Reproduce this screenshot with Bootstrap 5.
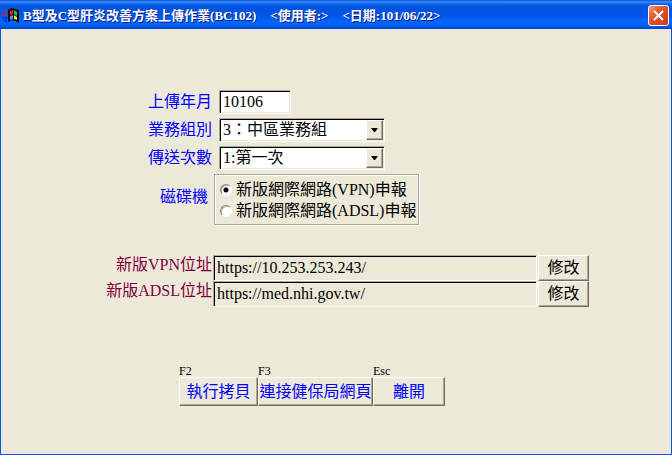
<!DOCTYPE html>
<html lang="zh-Hant">
<head>
<meta charset="utf-8">
<meta name="viewport" content="width=device-width, initial-scale=1">
<title>B型及C型肝炎改善方案上傳作業(BC102)</title>
<link rel="stylesheet" href="https://cdn.jsdelivr.net/npm/bootstrap@5.3.0/dist/css/bootstrap.min.css">
<style>
  body {
    font-family: "Liberation Serif", "Noto Sans CJK TC", serif;
    font-weight: 400;
    font-size: 16px;
    line-height: 20px;
    color: #000;
    background: #ece9d8;
  }
  .window { border: solid #0054e3; border-width: 0 1px 1px; }
  .title-bar {
    height: 29px;
    padding: 2px 1px 0 2px;
    margin: 0 -1px;
    background: linear-gradient(#0a4fd0 0, #3c90fc 2px, #0864ea 4px, #0053dd 8px, #0055e5 15px, #0264fc 22px, #0262f6 25px, #0143cf 29px);
  }
  .title-text {
    padding-left: 3px;
    font-size: 13px;
    font-weight: 700;
    line-height: 26px;
    color: #fff;
    text-shadow: 1px 1px #0a1883;
    gap: 14px;
    white-space: pre;
  }
  .close-btn {
    width: 21px;
    height: 21px;
    margin-right: 2px;
    border: 1px solid #fff;
    border-radius: 3px;
    background: linear-gradient(135deg, #f0a080, #e25a34 35%, #c83a10);
  }
  .form-area { padding-top: 61px; }
  .entry-label { width: 212px; padding-right: 1px; color: #00f; text-align: right; }
  .entry-field { margin-left: 6px; }
  .sunken {
    height: 24px;
    padding: 0 3px;
    border: 1px solid;
    border-color: #aca899 #fff #fff #aca899;
    box-shadow: inset 1px 1px #000, inset -1px -1px #ece9d8;
    border-radius: 0;
    background: #fff;
    color: #000;
    line-height: 20px;
    outline-offset: 1px;
  }
  .month-box { width: 72px; }
  .drop { width: 166px; }
  .drop select { appearance: none; }
  .drop-arrow { top: 2px; right: 2px; width: 17px; height: 20px; pointer-events: none; }
  .raised {
    border: 1px solid;
    border-color: #fff #716f64 #716f64 #fff;
    box-shadow: inset -1px -1px #aca899;
    border-radius: 0;
    background: #ece9d8;
    white-space: nowrap;
  }
  .medium-label { padding: 0 5px 6px 0; }
  .medium-box {
    width: 205px;
    height: 51px;
    margin-left: 1px;
    padding: 4px;
    border: 1px solid #aca899;
    box-shadow: inset 1px 1px #fff, 1px 1px #fff;
  }
  .medium-box input {
    flex: none;
    width: 12px;
    height: 12px;
    margin: 0 4px 0 1px;
    appearance: none;
    border: 1px solid;
    border-color: #8c897c #fff #fff #8c897c;
    border-radius: 50%;
    background: #fff;
    box-shadow: inset 1px 1px #b5b2a4;
  }
  .medium-box input:checked { background: radial-gradient(circle, #000 2px, #fff 3px); }
  .medium-box label { line-height: 21px; white-space: nowrap; }
  .addresses { padding-top: 30px; }
  .address-label { color: #800040; }
  .address-box { width: 324px; height: 26px; min-width: 0; background: #ece9d8; }
  .edit-btn { width: 51px; height: 26px; margin-left: 1px; }
  .actions { padding: 59px 0 20px 178px; }
  .key-hint { font-size: 12px; line-height: 11px; }
  .action-btn { height: 29px; color: #00f; }
  .w-copy { width: 79px; }
  .w-link { width: 115px; }
  .w-exit { width: 72px; }
</style>
</head>
<body>
<div class="window min-vh-100">
  <header class="title-bar d-flex align-items-center">
    <svg width="18" height="18" viewBox="0 0 18 18" aria-hidden="true">
      <path d="M6 3 10 1 13 2 17 3V16L14 14 10 13 6 15Z" fill="#000"/>
      <path d="M8 4 11 3V7L8 8Z" fill="#f02020"/>
      <path d="M12 3 15 5V9L12 7Z" fill="#20d040"/>
      <path d="M8 9 11 8V12L8 13Z" fill="#30a0ff"/>
      <path d="M12 8 15 10V13L12 12Z" fill="#ffe010"/>
      <path d="M1 4h1v2H1zM3 4h2v2H3zM1 7h1v2H1zM3 7h2v2H3z" fill="#e02040"/>
      <path d="M1 10h1v2H1zM3 10h2v2H3zM1 13h1v1H1zM3 13h2v2H3z" fill="#1020b0"/>
    </svg>
    <div class="title-text d-flex flex-grow-1"><span>B型及C型肝炎改善方案上傳作業(BC102)</span><span>&lt;使用者:&gt;</span><span>&lt;日期:101/06/22&gt;</span></div>
    <button type="button" class="close-btn p-0 d-flex align-items-center justify-content-center" aria-label="關閉">
      <svg width="13" height="13" viewBox="0 0 13 13" aria-hidden="true"><path d="M2 2 11 11M11 2 2 11" stroke="#fff" stroke-width="2"/></svg>
    </button>
  </header>

  <form class="form-area">
    <div class="d-flex align-items-center mb-1">
      <label class="entry-label" for="month">上傳年月</label>
      <input class="sunken month-box entry-field" id="month" type="text" value="10106">
    </div>
    <div class="d-flex align-items-center mb-1">
      <label class="entry-label" for="group">業務組別</label>
      <div class="drop position-relative entry-field">
        <select class="sunken w-100 d-block" id="group"><option>3：中區業務組</option></select>
        <span class="drop-arrow raised position-absolute d-flex align-items-center justify-content-center">
          <svg width="8" height="4" viewBox="0 0 8 4" aria-hidden="true"><path d="M0 0h7L4 4H3Z"/></svg>
        </span>
      </div>
    </div>
    <div class="d-flex align-items-center mb-1">
      <label class="entry-label" for="times">傳送次數</label>
      <div class="drop position-relative entry-field">
        <select class="sunken w-100 d-block" id="times"><option>1:第一次</option></select>
        <span class="drop-arrow raised position-absolute d-flex align-items-center justify-content-center">
          <svg width="8" height="4" viewBox="0 0 8 4" aria-hidden="true"><path d="M0 0h7L4 4H3Z"/></svg>
        </span>
      </div>
    </div>
    <div class="d-flex align-items-center" role="radiogroup" aria-labelledby="medium">
      <span class="entry-label medium-label" id="medium">磁碟機</span>
      <div class="medium-box">
        <div class="d-flex align-items-center"><input type="radio" name="medium" id="vpn" checked><label for="vpn">新版網際網路(VPN)申報</label></div>
        <div class="d-flex align-items-center"><input type="radio" name="medium" id="adsl"><label for="adsl">新版網際網路(ADSL)申報</label></div>
      </div>
    </div>

    <div class="addresses">
      <div class="d-flex">
        <label class="entry-label address-label" for="vpn-url">新版VPN位址</label>
        <input class="sunken address-box" id="vpn-url" type="text" value="https://10.253.253.243/" readonly>
        <button type="button" class="raised edit-btn p-0">修改</button>
      </div>
      <div class="d-flex">
        <label class="entry-label address-label" for="adsl-url">新版ADSL位址</label>
        <input class="sunken address-box" id="adsl-url" type="text" value="https://med.nhi.gov.tw/" readonly>
        <button type="button" class="raised edit-btn p-0">修改</button>
      </div>
    </div>

    <div class="actions d-flex">
      <div class="w-copy"><div class="key-hint">F2</div><button type="button" class="raised action-btn w-100 p-0">執行拷貝</button></div>
      <div class="w-link"><div class="key-hint">F3</div><button type="button" class="raised action-btn w-100 p-0">連接健保局網頁</button></div>
      <div class="w-exit"><div class="key-hint">Esc</div><button type="button" class="raised action-btn w-100 p-0">離開</button></div>
    </div>
  </form>
</div>
<script src="https://cdn.jsdelivr.net/npm/bootstrap@5.3.0/dist/js/bootstrap.bundle.min.js"></script>
</body>
</html>
